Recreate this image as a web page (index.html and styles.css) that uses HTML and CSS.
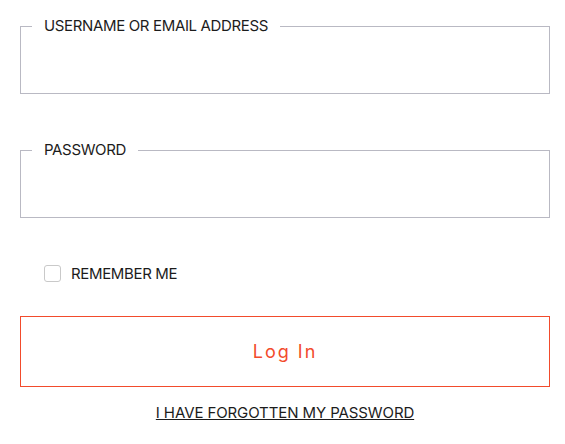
FILE: index.html
```html
<!DOCTYPE html>
<html lang="en">
<head>
    <meta charset="UTF-8">
    <meta name="viewport" content="width=device-width, initial-scale=1.0">
    <title>Log In</title>
    <link rel="stylesheet" href="styles.css">
</head>
<body>
    <form class="login-form">
        <fieldset class="campo">
            <legend>USERNAME OR EMAIL ADDRESS</legend>
            <input type="text" id="username">
        </fieldset>
        <fieldset class="campo">
            <legend>PASSWORD</legend>
            <input type="password" id="password">
        </fieldset>
        <label class="lembrar">
            <input type="checkbox" id="rememberme">
            <span>REMEMBER ME</span>
        </label>
        <button type="submit" class="botao-login">Log In</button>
        <a href="#" class="esqueci">I HAVE FORGOTTEN MY PASSWORD</a>
    </form>
</body>
</html>
```

FILE: styles.css
```css
body {
    margin: 0;
    font-family: 'Inter', 'Noto Sans', sans-serif;
    color: #1c1c1c;
    background-color: #fff;
}
.login-form {
    display: flex;
    flex-direction: column;
    padding: 15px 15px 0 20px;
}
.campo {
    margin: 0 0 45px 0;
    padding: 0 11px;
    border: 1px solid #b9b9c3;
}
.campo legend {
    padding: 0 12px;
    font-size: 15px;
    line-height: 22px;
    letter-spacing: -0.35px;
}
.campo input {
    display: block;
    width: 100%;
    height: 56px;
    border: none;
    outline: none;
    padding: 0;
    font-size: 15px;
    background: transparent;
}
.lembrar {
    display: flex;
    align-items: center;
    gap: 10px;
    padding-left: 24px;
    font-size: 15px;
    letter-spacing: -0.35px;
    margin-top: 1px;
}
.lembrar input {
    appearance: none;
    width: 17px;
    height: 17px;
    margin: 0;
    border: 1px solid #c9c9c9;
    border-radius: 3px;
}
.botao-login {
    margin-top: 33px;
    height: 71px;
    background: #fff;
    border: 1px solid #f24b2c;
    color: #f24b2c;
    font-family: inherit;
    font-size: 18px;
    letter-spacing: 2px;
    cursor: pointer;
}
.esqueci {
    align-self: center;
    margin-top: 16px;
    color: #1c1c1c;
    font-size: 15px;
    letter-spacing: -0.1px;
}
```
